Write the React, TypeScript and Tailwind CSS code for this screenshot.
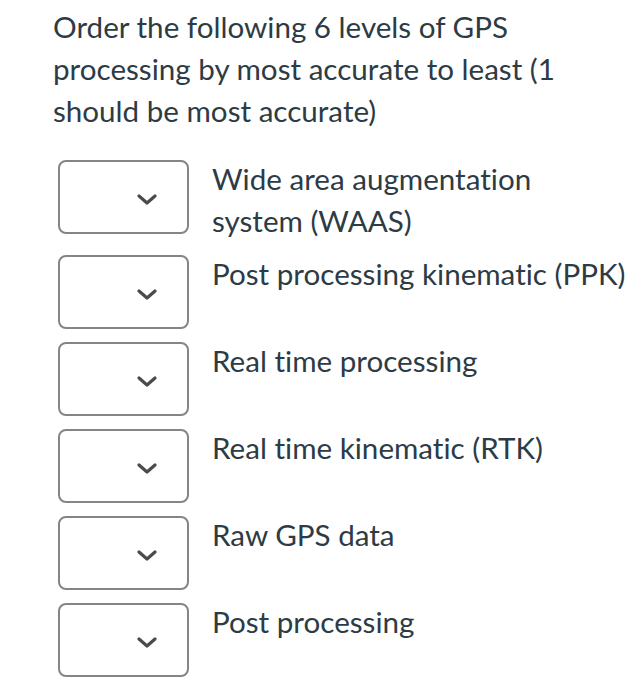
import React from 'react';

const items = [
  ['Wide area augmentation', 'system (WAAS)'],
  ['Post processing kinematic (PPK)'],
  ['Real time processing'],
  ['Real time kinematic (RTK)'],
  ['Raw GPS data'],
  ['Post processing'],
];

const Chevron = () => (
  <svg width="20" height="11" viewBox="0 0 20 11" fill="none">
    <path d="M2 2 L10 9 L18 2" stroke="#4b4b4b" strokeWidth="3.2" strokeLinecap="round" strokeLinejoin="round" />
  </svg>
);

const App: React.FC = () => {
  return (
    <div className="w-[641px] h-[700px] bg-white text-[#2d3b45] font-['Lato','Liberation_Sans',sans-serif] [font-variant-ligatures:none] pl-[53px] pt-[6px]">
      <p className="text-[29.6px] leading-[42px] w-[560px]">
        Order the following 6 levels of GPS processing by most accurate to least (1 should be most accurate)
      </p>
      <div className="flex flex-col gap-[11px] mt-[26px] pl-[5px]">
        {items.map((lines) => (
          <div key={lines[0]} className="flex items-start gap-[23px]">
            <div className="mt-[2px] w-[131px] h-[74px] shrink-0 rounded-[8px] border-2 border-[#858585] flex items-center justify-end pr-[30px] pt-[4px]">
              <Chevron />
            </div>
            <div className="text-[29.6px] leading-[42px] whitespace-nowrap">
              {lines.map((l) => (
                <div key={l}>{l}</div>
              ))}
            </div>
          </div>
        ))}
      </div>
    </div>
  );
};

export default App;
